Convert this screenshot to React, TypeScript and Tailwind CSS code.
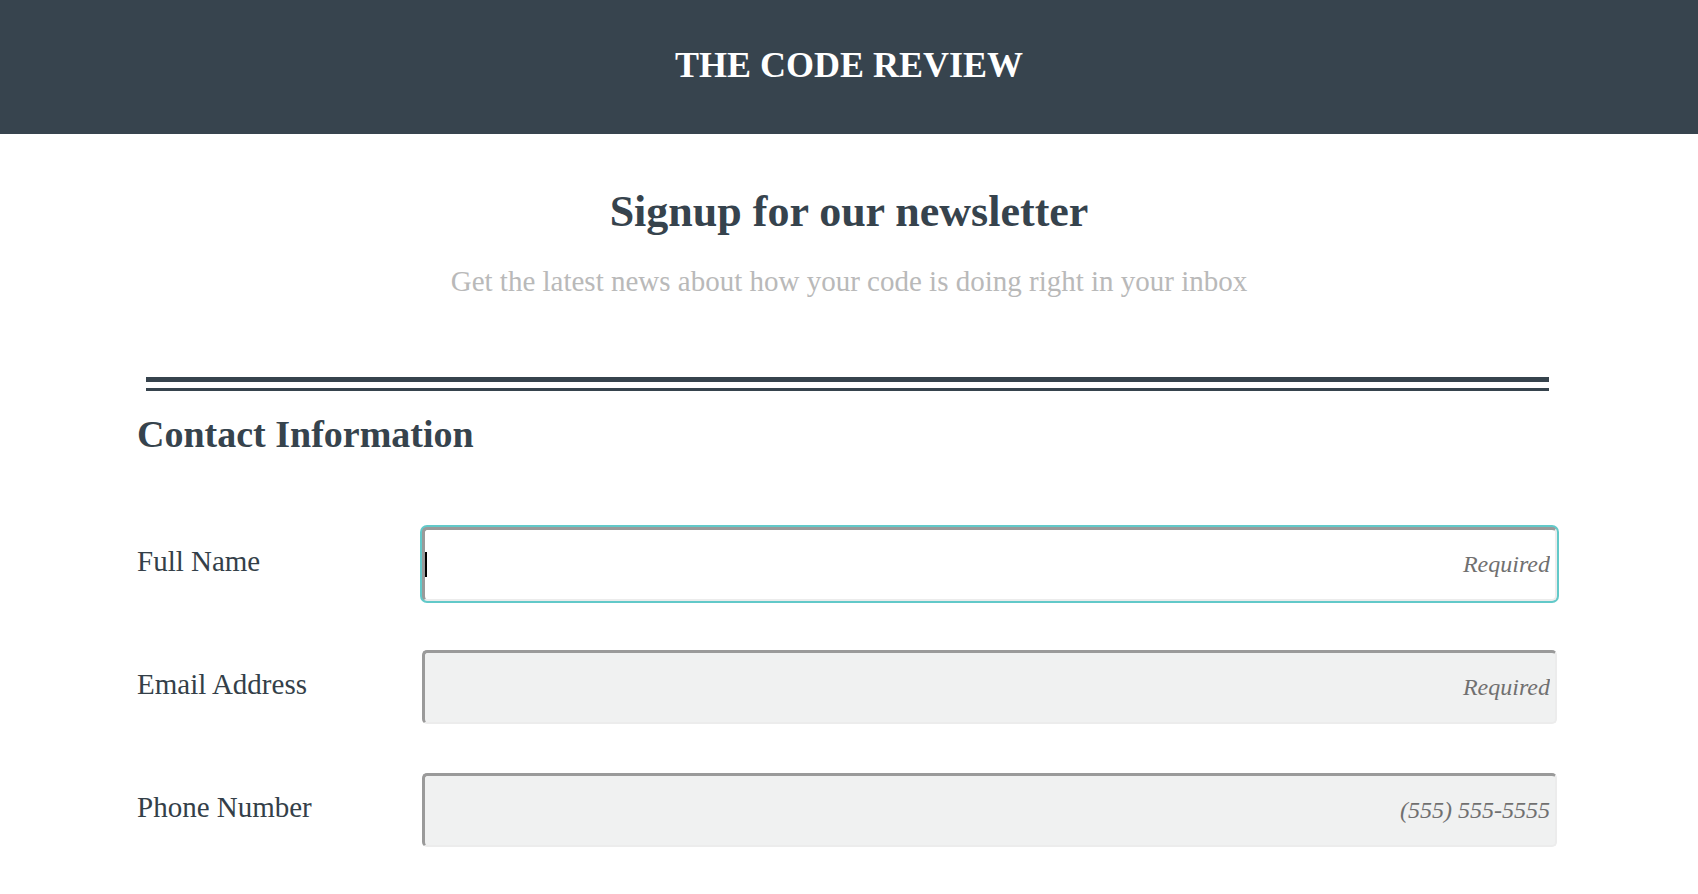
const serif = { fontFamily: '"Liberation Serif", "Times New Roman", serif' };

const fields = [
  { id: "name", label: "Full Name", placeholder: "Required", focused: true },
  { id: "email", label: "Email Address", placeholder: "Required", focused: false },
  { id: "phone", label: "Phone Number", placeholder: "(555) 555-5555", focused: false },
];

function Field({ label, placeholder, focused }: { label: string; placeholder: string; focused: boolean }) {
  return (
    <div className="contents">
      <label className="flex items-center pb-[6px] text-[29px] leading-none text-[#343f49]">{label}</label>
      <div className="relative">
        <input
          type="text"
          placeholder={placeholder}
          className={
            focused
              ? "block h-[74px] w-full rounded-[5px] border-t-[3px] border-l-[3px] border-r-2 border-b-2 border-t-[#9a9a9a] border-l-[#9a9a9a] border-r-[#ececec] border-b-[#ececec] bg-white pr-[5px] text-right text-[24px] italic caret-transparent outline-none ring-2 ring-[#62c9c9] placeholder:text-[#707070]"
              : "block h-[74px] w-full rounded-[5px] border-t-[3px] border-l-[3px] border-r-2 border-b-2 border-t-[#9a9a9a] border-l-[#9a9a9a] border-r-[#ececec] border-b-[#ececec] bg-[#f0f1f1] pr-[5px] text-right text-[24px] italic outline-none placeholder:text-[#707070]"
          }
          style={serif}
        />
        {focused && <span className="absolute left-[3px] top-[25px] h-[25px] w-[2px] bg-black" />}
      </div>
    </div>
  );
}

export default function App() {
  return (
    <div className="min-h-screen bg-white" style={serif}>
      <header className="flex h-[134px] items-center justify-center bg-[#37444e] pb-[5px]">
        <h1 className="text-[36px] font-bold leading-none text-white">THE CODE REVIEW</h1>
      </header>

      <section className="flex flex-col items-center pt-[56px]">
        <h2 className="text-[44px] font-bold leading-none text-[#36434d]">Signup for our newsletter</h2>
        <p className="mt-[33px] text-[29px] leading-none text-[#b9b9b9]">
          Get the latest news about how your code is doing right in your inbox
        </p>
      </section>

      <main className="pl-[137px] pr-[141px] pt-[81px]">
        <div className="ml-[9px] mr-[8px]">
          <div className="h-[5px] bg-[#36434d]" />
          <div className="mt-[6px] h-[3px] bg-[#36434d]" />
        </div>

        <h3 className="mt-[24px] text-[38px] font-bold leading-none text-[#36434d]">Contact Information</h3>

        <form className="mt-[74px] grid grid-cols-[285px_1fr] gap-y-[49px]">
          {fields.map((f) => (
            <Field key={f.id} label={f.label} placeholder={f.placeholder} focused={f.focused} />
          ))}
        </form>
      </main>
    </div>
  );
}
